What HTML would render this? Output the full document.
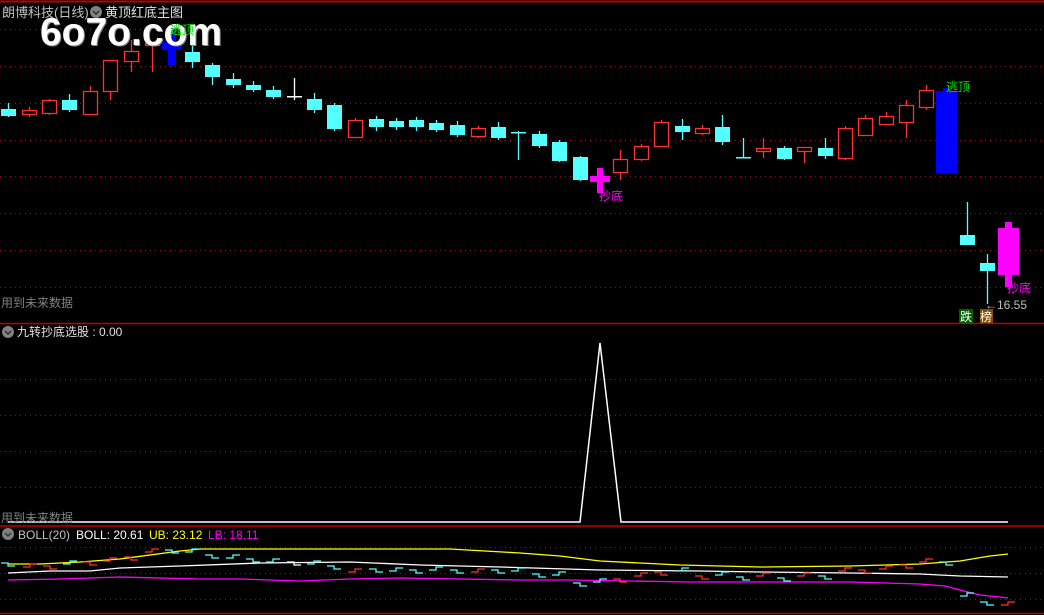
<!DOCTYPE html>
<html><head><meta charset="utf-8"><style>
html,body{margin:0;padding:0;background:#000;width:1044px;height:615px;overflow:hidden}
svg{display:block}
text{font-family:"Liberation Sans","Noto Sans CJK SC",sans-serif}
</style></head><body>
<svg id="s" width="1044" height="615" xmlns="http://www.w3.org/2000/svg">
<rect width="1044" height="615" fill="#000"/>
<g id="grid" stroke="#a01010" stroke-width="1" stroke-dasharray="1,4"></g>
<line x1="0" y1="1.5" x2="1044" y2="1.5" stroke="#c00000" stroke-width="2"/>
<line x1="23" y1="0" x2="23" y2="3" stroke="#c00000"/>
<line x1="0" y1="323.5" x2="1044" y2="323.5" stroke="#c00000" stroke-width="1.5"/>
<line x1="0" y1="526" x2="1044" y2="526" stroke="#c00000" stroke-width="1.5"/>
<line x1="0" y1="613.5" x2="1044" y2="613.5" stroke="#c00000" stroke-width="1.5"/>
<g id="c"></g>
<g id="b" fill="none" stroke-width="1.3"></g>
<polyline points="8,522 580,522 600,343 621,522 1008,522" fill="none" stroke="#fff" stroke-width="1.5"/>
<text x="2" y="17" font-size="13" fill="#c0c0c0">朗博科技(日线)</text>
<circle cx="96" cy="12" r="6" fill="#808080"/><path d="M93,11 l3,3 l3,-3" stroke="#222" fill="none" stroke-width="1.2"/>
<text x="105" y="17" font-size="13" fill="#e0e0e0">黄顶红底主图</text>
<text x="41" y="46" font-size="39" font-weight="bold" fill="#888" textLength="182" lengthAdjust="spacingAndGlyphs">6o7o.com</text>
<text x="40" y="45" font-size="39" font-weight="bold" fill="#fff" textLength="182" lengthAdjust="spacingAndGlyphs">6o7o.com</text>
<text x="170" y="34" font-size="12" fill="#00e000">逃顶</text>
<text x="946" y="91" font-size="12" fill="#00e000">逃顶</text>
<text x="599" y="200" font-size="12" fill="#ff00ff">抄底</text>
<text x="1007" y="292" font-size="12" fill="#ff00ff">抄底</text>
<text x="985" y="309" font-size="12" fill="#c0c0c0">←16.55</text>
<rect x="959" y="309" width="14" height="14" fill="#006000"/><text x="960" y="321" font-size="12" fill="#fff">跌</text>
<rect x="980" y="309" width="13" height="14" fill="#8a4a00"/><text x="980" y="321" font-size="12" fill="#fff">榜</text>
<text x="1" y="307" font-size="12" fill="#808080">用到未来数据</text>
<circle cx="8" cy="332" r="6" fill="#808080"/><path d="M5,331 l3,3 l3,-3" stroke="#222" fill="none" stroke-width="1.2"/>
<text x="17" y="336" font-size="12" fill="#e0e0e0">九转抄底选股 : 0.00</text>
<text x="1" y="522" font-size="12" fill="#808080">用到未来数据</text>
<circle cx="8" cy="534" r="6" fill="#808080"/><path d="M5,533 l3,3 l3,-3" stroke="#222" fill="none" stroke-width="1.2"/>
<text x="18" y="539" font-size="12" fill="#c0c0c0">BOLL(20)</text>
<text x="76" y="539" font-size="12" fill="#fff">BOLL: 20.61</text>
<text x="149" y="539" font-size="12" fill="#ffff00">UB: 23.12</text>
<text x="208" y="539" font-size="12" fill="#ff00ff">LB: 18.11</text>
</svg>
<script>
var NS="http://www.w3.org/2000/svg";
function el(p,t,a){var e=document.createElementNS(NS,t);for(var k in a)e.setAttribute(k,a[k]);p.appendChild(e);return e;}
var g=document.getElementById('grid');
[29,66,103,140,176,213,250,287,379,415,451,487,547,573,599].forEach(function(y){el(g,'line',{x1:0,y1:y+.5,x2:1044,y2:y+.5});});
var c=document.getElementById('c');
var R='#ff3030',C='#54ffff',W='#ffffff';
var d=[[8,109,116,103,117,C],[29,110,114,107,117,R,1],[49,100,113,99,115,R,1],[69,100,110,94,112,C],[90,91,114,86,115,R,1],[110,60,91,60,100,R,1],[131,51,61,40,72,R,1],[152,43,45,43,72,R,1],
[192,52,62,45,68,C],[212,65,77,63,85,C],[233,79,85,73,88,C],[253,85,90,81,92,C],[273,90,97,86,99,C],[294,96,97,78,100,W],[314,99,110,93,113,C],[334,105,129,103,131,C],
[355,120,137,118,138,R,1],[376,119,127,116,131,C],[396,121,127,118,130,C],[416,120,127,117,131,C],[436,123,130,120,132,C],[457,125,135,121,137,C],[478,128,136,126,138,R,1],[498,127,138,122,140,C],[518,132,133,131,160,C],[539,134,146,131,148,C],[559,142,161,140,162,C],[580,157,180,156,181,C],
[620,159,172,150,180,R,1],[641,146,159,144,161,R,1],[661,122,146,120,147,R,1],[682,126,132,119,140,C],[702,128,133,125,135,R,1],[722,127,142,115,145,C],[743,157,158,138,158,C],[763,148,151,138,158,R,1],[784,148,159,146,160,C],[804,147,151,147,163,R,1],[825,148,156,138,159,C],[845,128,158,126,160,R,1],[865,118,135,115,136,R,1],[886,116,124,112,125,R,1],[906,105,122,100,138,R,1],[926,90,107,85,110,R,1],
[967,235,245,202,245,C],[987,263,271,254,304,C]];
d.forEach(function(k){var x=k[0],w=14;
 el(c,'line',{x1:x+.5,y1:k[3],x2:x+.5,y2:k[4],stroke:k[5],'stroke-width':1.3});
 if(k[6])el(c,'rect',{x:x-w/2+.5,y:k[1]+.5,width:w,height:Math.max(k[2]-k[1],1),fill:'#000',stroke:k[5],'stroke-width':1.3});
 else el(c,'rect',{x:x-w/2,y:k[1],width:w+1,height:Math.max(k[2]-k[1],1.5),fill:k[5]});});
el(c,'rect',{x:162,y:42,width:20,height:8,fill:'#0000ff'});el(c,'rect',{x:168,y:30,width:8,height:35,fill:'#0000ff'});
el(c,'rect',{x:590,y:176,width:20,height:6,fill:'#ff00ff'});el(c,'rect',{x:597,y:168,width:6,height:25,fill:'#ff00ff'});
el(c,'rect',{x:936,y:91,width:21,height:82,fill:'#0000ff'});el(c,'rect',{x:943,y:88,width:7,height:4,fill:'#0000ff'});
el(c,'rect',{x:998,y:228,width:21,height:47,fill:'#ff00ff'});el(c,'rect',{x:1005,y:222,width:7,height:7,fill:'#ff00ff'});el(c,'rect',{x:1005,y:274,width:7,height:13,fill:'#ff00ff'});
var b=document.getElementById('b');
function pl(pts,col){el(b,'polyline',{points:pts,stroke:col});}
pl("8,564 40,564 80,562 120,559 180,551 200,549 450,549 520,553 560,556 600,561 680,565 760,567 850,566 920,564 960,561 990,556 1008,554",'#ffff00');
pl("8,573 50,571 90,571 120,568 180,566 260,563 350,562 420,565 500,567 600,570 700,571 760,572 850,573 920,574 960,576 1008,577",'#ffffff');
pl("8,580 60,579 120,577 200,579 240,579 300,581 350,579 400,578 520,580 570,580 690,582 780,582 850,582 920,584 945,586 960,590 980,595 1000,597 1008,598",'#ff00ff');
var st=[[8,563,C],[30,567,R],[50,566,R],[70,564,C],[90,562,R],[110,561,R],[131,557,R],[152,552,R],[172,550,C],[192,552,C],[212,555,C],[233,558,C],[253,559,C],[273,562,C],[294,562,W],[314,564,C],[334,566,C],[355,572,R],[376,569,C],[396,571,C],[416,570,C],[436,570,C],[457,570,C],[478,572,R],[498,570,C],[518,571,C],[539,574,C],[559,575,C],[580,583,C],[600,582,C],[620,579,R],[641,576,R],[661,572,R],[682,571,C],[702,576,R],[722,575,C],[743,577,C],[763,576,R],[784,578,C],[804,576,R],[825,576,C],[845,571,R],[865,570,R],[886,569,R],[906,565,R],[926,562,R],[946,562,C],[967,596,C],[987,602,C],[1008,605,R]];
st.forEach(function(s,i){var x=s[0];el(b,'path',{d:'M'+(x-7)+','+s[1]+' h7 v'+(i%2==0?3:-3)+' h7',stroke:s[2]});});
</script>
</body></html>
